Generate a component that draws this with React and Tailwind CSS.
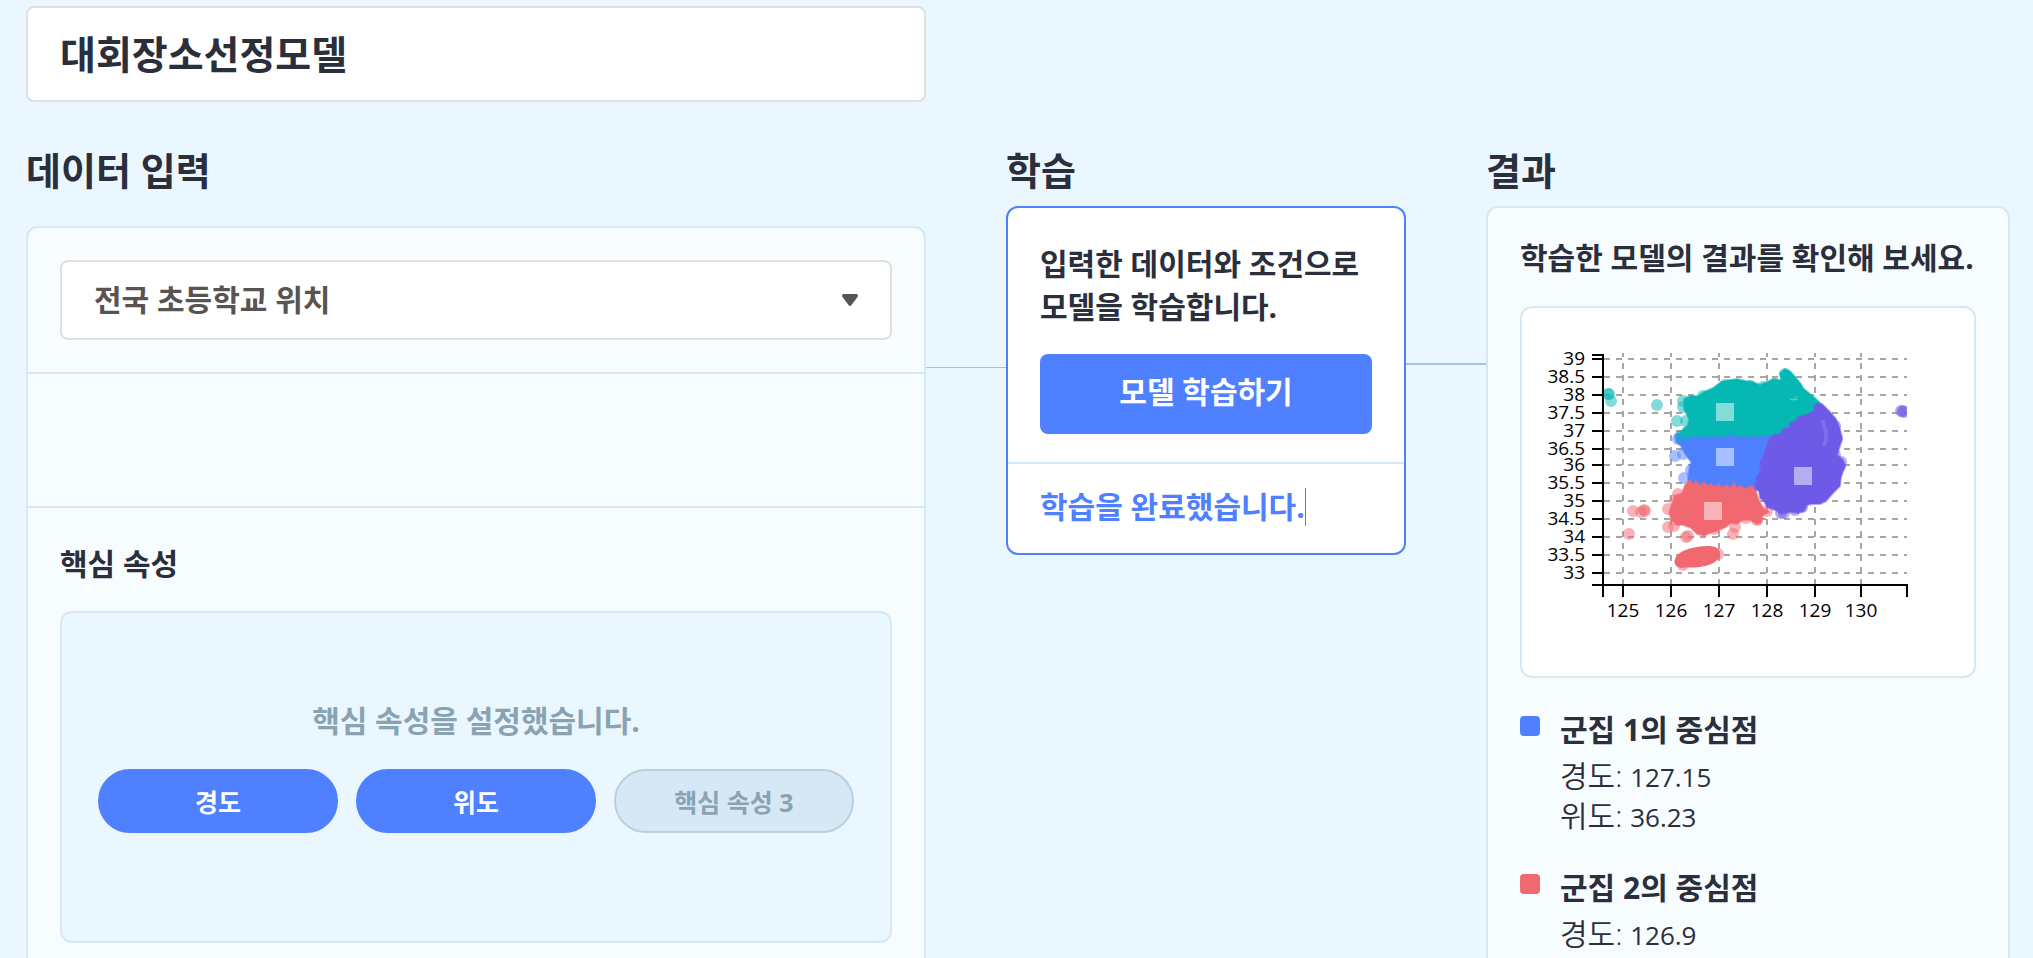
import { useState } from 'react';

const yTicks = [
  [39, 51], [38.5, 69], [38, 87], [37.5, 105], [37, 123], [36.5, 141], [36, 157],
  [35.5, 175], [35, 193], [34.5, 211], [34, 229], [33.5, 247], [33, 265],
];

const xTicks = [[125, 101], [126, 149], [127, 197], [128, 245], [129, 293], [130, 339]];

// dense area of each cluster, plus the loose points around it
const clusters = [
  {
    id: 'blue',
    color: '#4f80ff',
    area: '155,126 249,124 249,130 243,148 240,164 238,182 225,183 218,182 198,182 178,182 167,181 166,171 167,162 169,154 166,150 162,144 159,138 154,134',
    points: [[153, 148], [161, 146], [156, 131], [162, 170], [158, 129], [169, 162]],
    center: [194, 140],
  },
  {
    id: 'teal',
    color: '#05b8b4',
    area: '162,91 168,88 176,88 182,84 191,80 199,74 207,72 215,71 224,73 231,74 238,77 245,74 252,71 259,72 258,65 263,61 269,64 274,70 279,76 281,80 287,85 293,90 298,95 298,104 284,114 272,122 258,130 250,130 248,126 244,128 240,127 236,129 231,126 227,130 223,127 219,129 215,126 211,129 207,125 204,129 199,127 196,129 192,126 189,130 186,126 182,130 178,126 174,130 171,127 166,131 162,127 157,128 161,121 166,117 167,111 164,105 162,101',
    points: [[87, 86], [89, 93], [86, 86], [135, 97], [161, 93], [161, 99], [155, 113], [164, 113], [181, 88], [203, 77], [263, 66], [228, 78], [241, 79], [159, 128], [252, 76]],
    center: [194, 95],
  },
  {
    id: 'red',
    color: '#f26871',
    area: '153,188 160,185 163,177 168,172 171,176 174,173 178,178 182,174 185,178 189,176 193,179 197,176 200,180 205,177 208,180 212,175 215,180 219,178 223,181 228,178 233,180 236,190 241,200 247,204 241,207 239,215 235,216 228,212 221,212 215,216 209,215 204,219 195,223 188,225 182,228 175,226 169,220 161,217 154,217 149,211 147,205 150,196 151,193',
    points: [[111, 203], [122, 202], [119, 204], [123, 203], [107, 226], [146, 201], [146, 219], [152, 218], [164, 229], [166, 228], [211, 226], [213, 219], [156, 186], [153, 192], [235, 212], [245, 203], [224, 210], [161, 257], [196, 246], [192, 221]],
    center: [182, 194],
  },
  {
    id: 'purple',
    color: '#6e5ae6',
    area: '292,98 296,95 300,96 308,104 314,111 318,121 320,130 318,138 315,147 321,152 323,158 319,169 318,178 311,185 304,193 298,196 290,196 285,197 282,203 276,205 268,204 259,206 253,202 245,199 242,193 238,190 237,183 233,180 235,169 239,163 238,154 242,148 244,140 248,130 253,126 258,127 261,121 267,120 268,115 274,113 276,109 284,107 292,103',
    points: [[259, 205], [262, 205], [273, 202], [280, 199], [319, 154], [318, 158], [313, 118], [315, 131], [313, 147], [379, 103], [381, 103], [382, 104]],
    center: [272, 159],
  },
];

const results = [
  { name: '군집 1의 중심점', color: 'bg-[#4f80ff]', values: [['경도', '127.15'], ['위도', '36.23']] },
  { name: '군집 2의 중심점', color: 'bg-[#f26871]', values: [['경도', '126.9']] },
];

function ClusterChart() {
  return (
    <svg viewBox="0 0 452 368" className="block w-full" role="img" aria-label="군집">
      <defs>
        <clipPath id="plot">
          <rect x="82" y="46" width="303" height="230" />
        </clipPath>
      </defs>

      {/* Grid */}
      <g stroke="#a6a6a6" strokeWidth="2" strokeDasharray="6 6">
        {yTicks.map(([label, y]) => (
          <line key={label} x1="82" x2="385" y1={y} y2={y} />
        ))}
        {xTicks.map(([label, x]) => (
          <line key={label} x1={x} x2={x} y1="277" y2="45" />
        ))}
      </g>

      {/* Points */}
      <g clipPath="url(#plot)">
        {clusters.map((c) => (
          <g key={c.id} fill={c.color}>
            {c.points.map(([x, y], i) => (
              <circle key={i} cx={x} cy={y} r="6" opacity="0.5" />
            ))}
            <polygon points={c.area} stroke={c.color} strokeOpacity="0.5" strokeWidth="2" strokeLinejoin="round" />
          </g>
        ))}
        <path
          d="M153 251c2-6 9-9 17-11 9-2 20-3 25 0 4 3 4 7 1 11-4 5-11 7-18 8-7 1-13 0-18 1-5 0-9-4-7-9z"
          fill="#f26871"
        />
        <path d="M301 112l1 6 2 5v9l-2 6" fill="none" stroke="#fff" strokeOpacity="0.12" strokeWidth="4" />
        <path d="M268 91l4 1 4-1M275 88l-3 3" fill="none" stroke="#fff" strokeOpacity="0.4" />
      </g>
      {clusters.map((c) => (
        <rect key={c.id} x={c.center[0]} y={c.center[1]} width="18" height="18" fill="#fff" opacity="0.5" />
      ))}

      {/* Axes */}
      <path d="M70 47H81V277M70 277H385V289M81 277V289" fill="none" stroke="#000" strokeWidth="2" />
      <g stroke="#000" strokeWidth="2">
        {yTicks.map(([label, y]) => (
          <line key={label} x1="70" x2="81" y1={y} y2={y} />
        ))}
        {xTicks.map(([label, x]) => (
          <line key={label} x1={x} x2={x} y1="277" y2="289" />
        ))}
      </g>
      <g fontSize="19">
        {yTicks.map(([label, y]) => (
          <text key={label} x="63" y={y + 6} textAnchor="end">{label}</text>
        ))}
        {xTicks.map(([label, x]) => (
          <text key={label} x={x} y="309" textAnchor="middle">{label}</text>
        ))}
      </g>
    </svg>
  );
}

function DataInput() {
  return (
    <section>
      <h2 className="mb-7 text-[38px] leading-14 font-bold">데이터 입력</h2>
      <div className="rounded-xl border-2 border-[#d6e8f5] bg-[#f7fcff]">
        <div className="relative border-b-2 border-[#d6e8f5] p-8">
          <select
            aria-label="데이터"
            className="h-20 w-full appearance-none rounded-lg border-2 border-[#e0e0e0] bg-white px-8 pb-0.5 text-[30px] font-bold text-[#595353]"
          >
            <option>전국 초등학교 위치</option>
          </select>
          <svg viewBox="0 0 16 12" className="pointer-events-none absolute top-[66px] right-[66px] h-3 w-4" fill="#595353">
            <path d="M1 0h14q1.500 1 .5 3L9.500 11q-1.500 2-3 0L.5 3Q-.5 1 1 0z" />
          </svg>
        </div>
        <div className="h-[134px] border-b-2 border-[#d6e8f5]" />
        <div className="p-8">
          <h3 className="mb-6 text-[30px] leading-[47px] font-bold">핵심 속성</h3>
          <div className="h-[332px] rounded-xl border-2 border-[#d6e8f5] bg-[#eaf7ff] px-9 pt-[84px]">
            <p className="mb-6 text-center text-[30px] leading-12 font-bold text-[#8aa3b3]">핵심 속성을 설정했습니다.</p>
            <div className="flex gap-[18px] text-[25px] font-bold">
              <button className="h-16 flex-1 rounded-full border-2 border-[#4f80ff] bg-[#4f80ff] pt-1 text-white">경도</button>
              <button className="h-16 flex-1 rounded-full border-2 border-[#4f80ff] bg-[#4f80ff] pt-1 text-white">위도</button>
              <button className="h-16 flex-1 rounded-full border-2 border-[#bad0dd] bg-[#d6e8f5] pt-1 text-[#8aa3b3]">핵심 속성 3</button>
            </div>
          </div>
        </div>
      </div>
    </section>
  );
}

function Training() {
  return (
    <section>
      <h2 className="mb-2 text-[38px] leading-14 font-bold">학습</h2>
      <div className="rounded-xl border-2 border-[#4f80ff] bg-white">
        <div className="border-b-2 border-[#d6e8f5] px-8 pt-[34px] pb-7">
          <p className="mb-[26px] text-[30px] leading-[43px] font-bold">
            입력한 데이터와 조건으로
            <br />
            모델을 학습합니다.
          </p>
          <button className="h-20 w-full rounded-lg bg-[#4f80ff] pb-1.5 text-[30px] font-bold text-white">모델 학습하기</button>
        </div>
        <p className="px-8 pt-6 pb-[27px] text-[30px] leading-[38px] font-bold text-[#4f80ff]">
          <span className="inline-block border-r border-[#4f80ff]">학습을 완료했습니다.</span>
        </p>
      </div>
    </section>
  );
}

function Result() {
  return (
    <section>
      <h2 className="mb-2 text-[38px] leading-14 font-bold">결과</h2>
      <div className="rounded-xl border-2 border-[#d6e8f5] bg-[#f7fcff] px-8 pt-7 pb-8">
        <p className="mb-[26px] text-[30px] leading-11 font-bold whitespace-nowrap">학습한 모델의 결과를 확인해 보세요.</p>
        <div className="rounded-xl border-2 border-[#d6e8f5] bg-white">
          <ClusterChart />
        </div>
        <ul className="mt-8 space-y-8">
          {results.map((r) => (
            <li key={r.name} className="flex gap-5">
              <span className={`mt-1.5 size-5 shrink-0 rounded ${r.color}`} />
              <div className="text-[30px] leading-10">
                <h3 className="mb-1.5 font-bold">{r.name}</h3>
                {r.values.map(([key, value]) => (
                  <p key={key} className="font-[350]">
                    {key}: <span className="text-[26px] leading-none font-normal">{value}</span>
                  </p>
                ))}
              </div>
            </li>
          ))}
        </ul>
      </div>
    </section>
  );
}

export default function App() {
  const [title, setTitle] = useState('대회장소선정모델');

  return (
    <main className="h-screen overflow-hidden bg-[#eaf7ff] pt-1.5 pr-[23px] pl-[26px] font-['Open_Sans','Noto_Sans_CJK_KR',sans-serif] text-[#2b2e3b]">
      <div className="grid grid-cols-[900fr_80px_400fr_80px_524fr]">
        <input
          aria-label="모델 이름"
          value={title}
          onChange={(e) => setTitle(e.target.value)}
          className="mb-10 h-24 w-full min-w-0 rounded-lg border-2 border-[#e0e0e0] bg-white px-8 pb-1 text-[39px] font-bold"
        />
        <div className="col-span-4" />
        <DataInput />
        <div className="mt-[225px] h-px bg-[#a3c0d2]" />
        <Training />
        <div className="mt-[221px] h-0.5 bg-[#a9c5d8]" />
        <Result />
      </div>
    </main>
  );
}
